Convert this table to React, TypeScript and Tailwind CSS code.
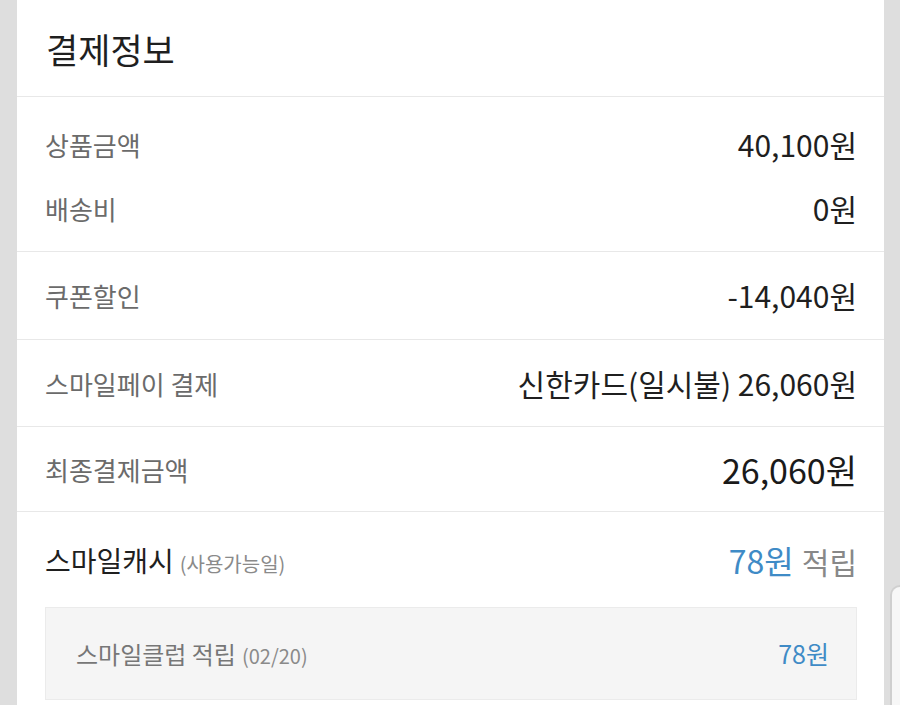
import React from 'react'

const font = { fontFamily: '"Noto Sans CJK KR", "Noto Sans", sans-serif' }

interface Row {
  label: string
  value: string
}

function InfoRow({ label, value }: Row) {
  return (
    <div className="flex items-center justify-between h-[40px]">
      <span className="text-[26px] text-[#6b6b6b]">{label}</span>
      <span className="text-[30px] text-[#1f1f1f]">{value}</span>
    </div>
  )
}

export default function App() {
  return (
    <div className="relative w-[900px] h-[705px] overflow-hidden bg-[#dedede]" style={font}>
      <div className="ml-[17px] w-[867px] h-full bg-white">
        {/* Header */}
        <div className="h-[97px] flex items-center px-[29px] border-b border-[#e8e8e8]">
          <h2 className="text-[35px] text-[#1f1f1f] leading-none">결제정보</h2>
        </div>

        {/* Amounts */}
        <div className="pl-[28px] pr-[27px] pt-[27px] pb-[23px] flex flex-col gap-[24px] border-b border-[#e8e8e8]">
          <InfoRow label="상품금액" value="40,100원" />
          <InfoRow label="배송비" value="0원" />
        </div>

        <div className="h-[88px] flex items-center pl-[28px] pr-[27px] border-b border-[#e8e8e8]">
          <div className="w-full"><InfoRow label="쿠폰할인" value="-14,040원" /></div>
        </div>

        <div className="h-[87px] flex items-center pl-[28px] pr-[27px] border-b border-[#e8e8e8]">
          <div className="w-full"><InfoRow label="스마일페이 결제" value="신한카드(일시불) 26,060원" /></div>
        </div>

        <div className="h-[85px] flex items-center justify-between pl-[28px] pr-[27px] border-b border-[#e8e8e8]">
          <span className="text-[26px] text-[#6b6b6b]">최종결제금액</span>
          <span className="text-[34px] text-[#1a1a1a]">26,060원</span>
        </div>

        {/* Smile cash */}
        <div className="pl-[28px] pr-[27px] pt-[28px]">
          <div className="flex items-center justify-between h-[40px]">
            <div className="flex items-baseline gap-[6px]">
              <span className="text-[28px] text-[#1f1f1f]">스마일캐시</span>
              <span className="text-[20px] text-[#8a8a8a]">(사용가능일)</span>
            </div>
            <div className="flex items-baseline gap-[8px]">
              <span className="text-[32px] text-[#3f8bc6]">78원</span>
              <span className="text-[30px] text-[#888888]">적립</span>
            </div>
          </div>
          <div className="mt-[27px] h-[93px] bg-[#f5f5f5] border border-[#ebebeb] flex items-center justify-between pl-[30px] pr-[27px]">
            <div className="flex items-baseline gap-[6px]">
              <span className="text-[24px] text-[#777777]">스마일클럽 적립</span>
              <span className="text-[20px] text-[#8a8a8a]">(02/20)</span>
            </div>
            <span className="text-[25px] text-[#3f8bc6]">78원</span>
          </div>
        </div>
      </div>

      {/* edge of floating panel */}
      <div className="absolute left-[890px] top-[585px] w-[20px] h-[130px] bg-[#f7f7f7] border-l-2 border-t-2 border-[#cfcfcf] rounded-tl-[10px]" />
    </div>
  )
}
